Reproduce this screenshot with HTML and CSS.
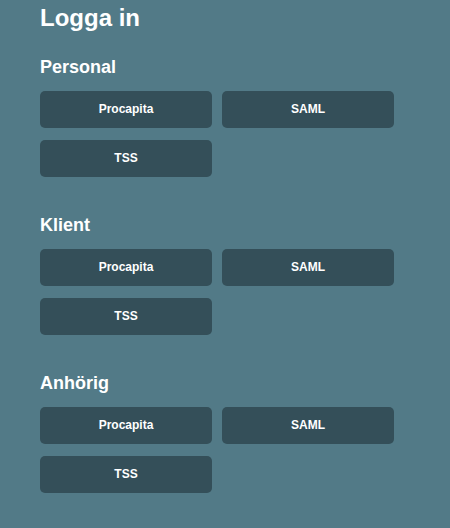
FILE: index.html
```html
<!DOCTYPE html>
<html lang="sv">
<head>
<meta charset="utf-8">
<title>Logga in</title>
<link rel="stylesheet" href="styles.css">
</head>
<body>
<main class="page">
  <h1 class="title">Logga in</h1>
  <section class="group">
    <h2 class="group-title">Personal</h2>
    <div class="buttons">
      <button class="btn">Procapita</button>
      <button class="btn">SAML</button>
      <button class="btn">TSS</button>
    </div>
  </section>
  <section class="group">
    <h2 class="group-title">Klient</h2>
    <div class="buttons">
      <button class="btn">Procapita</button>
      <button class="btn">SAML</button>
      <button class="btn">TSS</button>
    </div>
  </section>
  <section class="group">
    <h2 class="group-title">Anhörig</h2>
    <div class="buttons">
      <button class="btn">Procapita</button>
      <button class="btn">SAML</button>
      <button class="btn">TSS</button>
    </div>
  </section>
</main>
</body>
</html>
```
FILE: styles.css
```css
html, body {
  margin: 0;
  padding: 0;
  background: #527a87;
  height: 100%;
}
body {
  font-family: "Liberation Sans", Arial, sans-serif;
  color: #ffffff;
}
.page {
  padding: 4px 0 0 40px;
}
.title {
  margin: 0;
  font-size: 24px;
  line-height: 28px;
  font-weight: bold;
}
.group {
  margin-top: 24px;
}
.group + .group {
  margin-top: 37px;
}
.group-title {
  margin: 0 0 13px;
  font-size: 18px;
  line-height: 22px;
  font-weight: bold;
}
.buttons {
  display: grid;
  grid-template-columns: 172px 172px;
  column-gap: 10px;
  row-gap: 12px;
}
.btn {
  height: 37px;
  border: none;
  border-radius: 5px;
  background: #344f59;
  color: #ffffff;
  font-family: "Liberation Sans", Arial, sans-serif;
  font-size: 12px;
  font-weight: bold;
  padding: 0 0 1px;
}
```
